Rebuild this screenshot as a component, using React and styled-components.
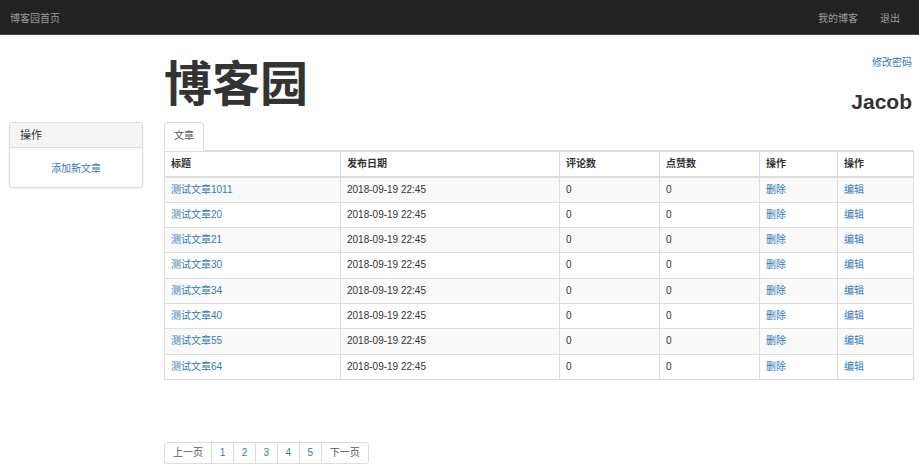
import React from 'react'
import styled, { createGlobalStyle } from 'styled-components'

const GlobalStyle = createGlobalStyle`
    html, body {
        margin: 0;
        padding: 0;
        background: #fff;
    }
    body {
        font-family: "Liberation Sans", "Noto Sans CJK SC", sans-serif;
        font-size: 10px;
        color: #333;
    }
    a {
        color: #337ab7;
        text-decoration: none;
    }
`

const articles = ['1011', '20', '21', '30', '34', '40', '55', '64']

export default function App() {
    return (
        <>
            <GlobalStyle />
            <NavBar>
                <Brand>博客园首页</Brand>
                <NavLinks>
                    <NavItem>我的博客</NavItem>
                    <NavItem>退出</NavItem>
                </NavLinks>
            </NavBar>

            <Body>
                <Sidebar>
                    <Panel>
                        <PanelHeading>操作</PanelHeading>
                        <PanelBody>
                            <a href="#">添加新文章</a>
                        </PanelBody>
                    </Panel>
                </Sidebar>

                <Main>
                    <Header>
                        <Title>博客园</Title>
                        <UserBox>
                            <a href="#">修改密码</a>
                            <UserName>Jacob</UserName>
                        </UserBox>
                    </Header>

                    <Tabs>
                        <Tab>文章</Tab>
                    </Tabs>

                    <Table>
                        <colgroup>
                            <col style={{ width: 176 }} />
                            <col style={{ width: 219 }} />
                            <col style={{ width: 100 }} />
                            <col style={{ width: 100 }} />
                            <col style={{ width: 78 }} />
                            <col />
                        </colgroup>
                        <thead>
                            <tr>
                                <th>标题</th>
                                <th>发布日期</th>
                                <th>评论数</th>
                                <th>点赞数</th>
                                <th>操作</th>
                                <th>操作</th>
                            </tr>
                        </thead>
                        <tbody>
                            {articles.map(n => (
                                <tr key={n}>
                                    <td><a href="#">测试文章{n}</a></td>
                                    <td>2018-09-19 22:45</td>
                                    <td>0</td>
                                    <td>0</td>
                                    <td><a href="#">删除</a></td>
                                    <td><a href="#">编辑</a></td>
                                </tr>
                            ))}
                        </tbody>
                    </Table>

                    <Pager>
                        <PageItem muted>上一页</PageItem>
                        <PageItem>1</PageItem>
                        <PageItem>2</PageItem>
                        <PageItem>3</PageItem>
                        <PageItem>4</PageItem>
                        <PageItem>5</PageItem>
                        <PageItem muted>下一页</PageItem>
                    </Pager>
                </Main>
            </Body>
        </>
    )
}

const NavBar = styled.div`
    display: flex;
    align-items: center;
    justify-content: space-between;
    height: 34px;
    padding: 0 19px 0 10px;
    background: #222;
    border-bottom: 1px solid #4a4a4a;
    color: #9d9d9d;
    font-size: 10px;
`

const Brand = styled.span``

const NavLinks = styled.div`
    display: flex;
    gap: 22px;
`

const NavItem = styled.span``

const Body = styled.div`
    display: flex;
    padding: 0 5px 0 9px;
    gap: 21px;
`

const Sidebar = styled.div`
    width: 134px;
    flex-shrink: 0;
    padding-top: 87px;
`

const Panel = styled.div`
    border: 1px solid #ddd;
    border-radius: 3px;
    box-shadow: 0 1px 2px rgba(0, 0, 0, 0.08);
    background: #fff;
`

const PanelHeading = styled.div`
    height: 24px;
    line-height: 24px;
    padding: 0 10px;
    background: #f5f5f5;
    border-bottom: 1px solid #ddd;
    font-size: 11px;
    color: #333;
`

const PanelBody = styled.div`
    height: 39px;
    display: flex;
    align-items: center;
    justify-content: center;
`

const Main = styled.div`
    flex: 1;
    min-width: 0;
`

const Header = styled.div`
    display: flex;
    justify-content: space-between;
    height: 87px;
`

const Title = styled.h1`
    margin: 0;
    padding-top: 21px;
    font-size: 48px;
    line-height: 1;
    font-weight: bold;
    color: #333;
    font-family: "Noto Sans CJK SC", sans-serif;
`

const UserBox = styled.div`
    display: flex;
    flex-direction: column;
    align-items: flex-end;
    padding-top: 21px;
    padding-right: 2px;
    line-height: 14px;
`

const UserName = styled.div`
    margin-top: 20px;
    font-size: 21px;
    line-height: 24px;
    font-weight: bold;
    color: #333;
`

const Tabs = styled.div`
    display: flex;
    border-bottom: 1px solid #ddd;
`

const Tab = styled.div`
    width: 38px;
    height: 27px;
    line-height: 26px;
    text-align: center;
    border: 1px solid #ddd;
    border-bottom-color: transparent;
    border-radius: 3px 3px 0 0;
    margin-bottom: -1px;
    background: #fff;
    color: #555;
`

const Table = styled.table`
    width: 100%;
    table-layout: fixed;
    border-collapse: collapse;
    border: 1px solid #ddd;
    border-top: none;

    th, td {
        padding: 6px 6px;
        line-height: 12.3px;
        text-align: left;
        border: 1px solid #ddd;
        white-space: nowrap;
        overflow: hidden;
    }

    th {
        font-weight: bold;
        color: #333;
        border-bottom: 2px solid #ddd;
        line-height: 11.5px;
    }

    tbody tr:nth-child(odd) {
        background: #f9f9f9;
    }
`

const Pager = styled.div`
    display: flex;
    margin-top: 62px;
`

const PageItem = styled.a`
    height: 20px;
    line-height: 20px;
    padding: 0 ${p => (p.muted ? '8px' : '7.7px')};
    border: 1px solid #ddd;
    margin-left: -1px;
    color: ${p => (p.muted ? '#555' : '#337ab7')};
    background: #fff;

    &:first-child {
        margin-left: 0;
        border-radius: 3px 0 0 3px;
    }

    &:last-child {
        border-radius: 0 3px 3px 0;
    }
`
